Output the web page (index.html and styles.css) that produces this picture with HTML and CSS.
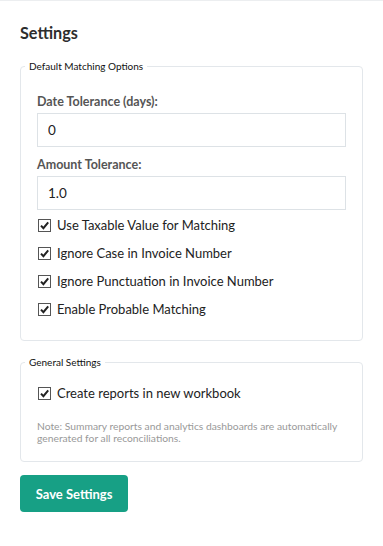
FILE: index.html
```html
<!DOCTYPE html>
<html lang="en">
<head>
  <meta charset="UTF-8">
  <meta name="viewport" content="width=device-width, initial-scale=1.0">
  <title>Settings</title>
  <link rel="stylesheet" href="styles.css">
</head>
<body>
  <div class="settings">
    <h1>Settings</h1>

    <!-- Matching options -->
    <fieldset class="group first-group">
      <legend>Default Matching Options</legend>

      <div class="field first">
        <label for="dateTolerance">Date Tolerance (days):</label>
        <input type="text" id="dateTolerance" value="0">
      </div>
      <div class="field">
        <label for="amountTolerance">Amount Tolerance:</label>
        <input type="text" id="amountTolerance" value="1.0">
      </div>

      <label class="check-row">
        <span class="box"><svg viewBox="0 0 13 13" width="13" height="13"><path d="M3 6.6 L5.4 9.2 L10.2 3.4" /></svg></span>
        Use Taxable Value for Matching
      </label>
      <label class="check-row">
        <span class="box"><svg viewBox="0 0 13 13" width="13" height="13"><path d="M3 6.6 L5.4 9.2 L10.2 3.4" /></svg></span>
        Ignore Case in Invoice Number
      </label>
      <label class="check-row">
        <span class="box"><svg viewBox="0 0 13 13" width="13" height="13"><path d="M3 6.6 L5.4 9.2 L10.2 3.4" /></svg></span>
        Ignore Punctuation in Invoice Number
      </label>
      <label class="check-row">
        <span class="box"><svg viewBox="0 0 13 13" width="13" height="13"><path d="M3 6.6 L5.4 9.2 L10.2 3.4" /></svg></span>
        Enable Probable Matching
      </label>
    </fieldset>

    <!-- General -->
    <fieldset class="group">
      <legend>General Settings</legend>

      <label class="check-row">
        <span class="box"><svg viewBox="0 0 13 13" width="13" height="13"><path d="M3 6.6 L5.4 9.2 L10.2 3.4" /></svg></span>
        Create reports in new workbook
      </label>
      <p class="note">Note: Summary reports and analytics dashboards are automatically generated for all reconciliations.</p>
    </fieldset>

    <button class="save-btn">Save Settings</button>
  </div>
</body>
</html>
```

FILE: styles.css
```css
body {
  margin: 0;
  font-family: 'Lato', 'Open Sans', sans-serif;
  color: #333;
  background: #fff;
  border-top: 1px solid #eceef0;
}

.settings {
  padding: 21px 20px 20px;
}

h1 {
  font-size: 16.2px;
  font-weight: bold;
  line-height: 22px;
  color: #2d2d2d;
  margin: 0 0 16px;
}

/* Option groups */
.group {
  margin: 0 0 13px;
  padding: 10px 16px 17px;
  border: 1px solid #e3e7eb;
  border-radius: 4px;
}

.first-group {
  padding-top: 10px;
  padding-bottom: 17px;
  margin-bottom: 15px;
}

.group legend {
  font-size: 10px;
  line-height: 13px;
  color: #111;
  padding: 0 4px;
  margin-left: -12px;
}

.field {
  display: flex;
  flex-direction: column;
}

.field.first {
  margin-top: 10px;
}

.field + .field {
  margin-top: 9px;
}

.field:last-of-type {
  margin-bottom: 1px;
}

.field label {
  font-size: 12.5px;
  font-weight: bold;
  line-height: 17px;
  color: #555;
  margin-bottom: 3px;
}

.field input {
  height: 34px;
  box-sizing: border-box;
  border: 1px solid #dde2e6;
  border-radius: 0;
  padding: 0 10px;
  font-family: inherit;
  font-size: 13.5px;
  color: #222;
  outline: none;
}

.check-row {
  display: flex;
  align-items: center;
  height: 28px;
  font-size: 13px;
  color: #222;
  padding-left: 1px;
}

.box {
  width: 13px;
  height: 13px;
  box-sizing: border-box;
  border: 1px solid #555;
  margin-right: 6px;
  display: flex;
  background: #fff;
}

.box svg {
  margin: -1px;
}

.box path {
  fill: none;
  stroke: #222;
  stroke-width: 2;
}

.note {
  margin: 13px 0 0;
  font-size: 10.3px;
  line-height: 12px;
  color: #999;
}

.save-btn {
  width: 108px;
  height: 37px;
  border: none;
  border-radius: 4px;
  background: #17a085;
  color: #fff;
  font-family: inherit;
  font-size: 13px;
  font-weight: bold;
  cursor: pointer;
}
```
